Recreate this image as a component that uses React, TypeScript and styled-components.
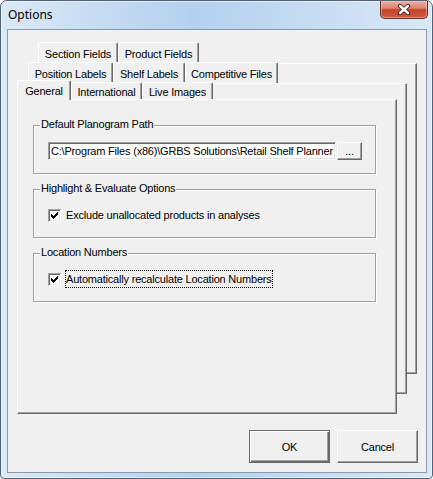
import React from "react";
import styled, { createGlobalStyle } from "styled-components";

const colors = {
  face: "#f0f0f0",
  light: "#ffffff",
  shadow: "#a0a0a0",
  darkShadow: "#696969",
  lightShadow: "#e3e3e3",
  text: "#000000",
};

const GlobalStyle = createGlobalStyle`
  html, body {
    margin: 0;
    padding: 0;
    background: #ffffff;
  }
  body {
    font-family: "Liberation Sans", Arial, sans-serif;
    font-size: 11px;
    letter-spacing: -0.2px;
    color: ${colors.text};
  }
`;

const Window = styled.div`
  box-sizing: border-box;
  width: 433px;
  height: 479px;
  display: flex;
  flex-direction: column;
  border: 1px solid #4f6378;
  border-radius: 7px 7px 4px 4px;
  background: linear-gradient(to right, #dce9f6 0%, #c6dcf2 22%, #b3d1ef 45%, #c4dbf2 70%, #dae8f6 100%);
  box-shadow: inset 0 0 0 1px rgba(255, 255, 255, 0.55);
`;

const TitleBar = styled.div`
  height: 28px;
  flex: none;
  display: flex;
  align-items: flex-start;
  justify-content: space-between;
`;

const Title = styled.span`
  font-family: "Noto Sans", "Open Sans", sans-serif;
  font-size: 12px;
  letter-spacing: normal;
  line-height: 16px;
  margin: 6px 0 0 7px;
`;

const CloseButton = styled.div`
  box-sizing: border-box;
  width: 48px;
  height: 18px;
  margin-right: 4px;
  border: 1px solid #6b2c24;
  border-top: none;
  border-radius: 0 0 5px 5px;
  background: linear-gradient(#eab0a3 0%, #dc8470 42%, #c5432a 52%, #cf5b3f 100%);
  box-shadow: inset 0 0 0 1px rgba(255, 210, 200, 0.45);
  display: flex;
  align-items: center;
  justify-content: center;
`;

const Client = styled.div`
  flex: 1;
  margin: 0 5px 5px 6px;
  border: 1px solid #8a9aac;
  background: ${colors.face};
  display: flex;
  flex-direction: column;
`;

const TabArea = styled.div`
  display: grid;
`;

const Layer = styled.div<{ $left: number; $top: number; $width: number }>`
  grid-area: 1 / 1;
  align-self: start;
  justify-self: start;
  margin: ${p => p.$top}px 0 0 ${p => p.$left}px;
  width: ${p => p.$width}px;
  display: flex;
  flex-direction: column;
`;

const TabRow = styled.div<{ $height: number }>`
  height: ${p => p.$height}px;
  display: flex;
  align-items: flex-end;
`;

const Tab = styled.div<{ $width: number; $height: number; $selected?: boolean }>`
  box-sizing: border-box;
  width: ${p => p.$width}px;
  height: ${p => p.$height}px;
  position: relative;
  z-index: ${p => (p.$selected ? 1 : 0)};
  margin-bottom: ${p => (p.$selected ? -1 : 0)}px;
  border-left: 1px solid ${colors.light};
  border-top: 1px solid ${colors.light};
  border-right: 1px solid ${colors.darkShadow};
  border-radius: 2px 2px 0 0;
  box-shadow: inset -1px 0 0 ${colors.shadow};
  background: ${colors.face};
  display: flex;
  align-items: center;
  justify-content: center;
  padding-top: 1px;
  white-space: nowrap;
`;

const Page = styled.div<{ $height: number }>`
  box-sizing: border-box;
  height: ${p => p.$height}px;
  border-top: 1px solid ${colors.light};
  border-left: 1px solid ${colors.light};
  border-right: 1px solid ${colors.darkShadow};
  border-bottom: 1px solid ${colors.darkShadow};
  box-shadow: inset -1px -1px 0 ${colors.shadow};
  background: ${colors.face};
  display: flex;
  flex-direction: column;
  gap: 15px;
  padding: 25px 0 0 15px;
`;

const Group = styled.div`
  box-sizing: border-box;
  position: relative;
  width: 343px;
  height: 49px;
  border: 1px solid ${colors.shadow};
  box-shadow: inset 1px 1px 0 ${colors.light}, 1px 1px 0 ${colors.light};
  padding: 16px 0 0 14px;
`;

const Legend = styled.span`
  position: absolute;
  top: -8px;
  left: 6px;
  padding: 0 1px;
  line-height: 13px;
  background: ${colors.face};
  white-space: nowrap;
`;

const PathRow = styled.div`
  display: flex;
  gap: 1px;
`;

const TextBox = styled.div`
  box-sizing: border-box;
  width: 288px;
  height: 18px;
  border: 1px solid;
  border-color: ${colors.shadow} ${colors.light} ${colors.light} ${colors.shadow};
  box-shadow: inset 1px 1px 0 ${colors.darkShadow}, inset -1px -1px 0 ${colors.lightShadow};
  background: #ffffff;
  padding: 0 0 0 2px;
  line-height: 16px;
  white-space: nowrap;
  overflow: hidden;
`;

const SmallButton = styled.div`
  box-sizing: border-box;
  width: 25px;
  height: 18px;
  border: 1px solid;
  border-color: ${colors.light} ${colors.darkShadow} ${colors.darkShadow} ${colors.light};
  box-shadow: inset -1px -1px 0 ${colors.shadow};
  display: flex;
  align-items: center;
  justify-content: center;
  line-height: 14px;
`;

const CheckRow = styled.div`
  height: 18px;
  display: flex;
  align-items: center;
`;

const CheckBox = styled.div`
  box-sizing: border-box;
  width: 13px;
  height: 13px;
  border: 1px solid;
  border-color: ${colors.shadow} ${colors.light} ${colors.light} ${colors.shadow};
  box-shadow: inset 1px 1px 0 ${colors.darkShadow}, inset -1px -1px 0 ${colors.lightShadow};
  background: #ffffff;
  display: flex;
  align-items: center;
  justify-content: center;
`;

const CheckLabel = styled.span<{ $focused?: boolean }>`
  margin-left: 4px;
  padding: 1px 0;
  line-height: 14px;
  border: 1px ${p => (p.$focused ? "dotted #000000" : "solid transparent")};
  white-space: nowrap;
`;

const ButtonRow = styled.div`
  flex: 1;
  display: flex;
  justify-content: flex-end;
  align-items: flex-start;
  gap: 7px;
  padding: 16px 8px 0 0;
`;

const DialogButton = styled.div<{ $default?: boolean }>`
  box-sizing: border-box;
  width: 81px;
  height: 33px;
  border: 1px solid;
  border-color: ${p =>
    p.$default
      ? colors.darkShadow
      : `${colors.light} ${colors.darkShadow} ${colors.darkShadow} ${colors.light}`};
  box-shadow: ${p =>
    p.$default
      ? `inset 1px 1px 0 ${colors.light}, inset -1px -1px 0 ${colors.darkShadow}, inset -2px -2px 0 ${colors.shadow}`
      : `inset -1px -1px 0 ${colors.shadow}`};
  display: flex;
  align-items: center;
  justify-content: center;
`;

function CheckMark() {
  return (
    <svg width="7" height="7" viewBox="0 0 7 7" shapeRendering="crispEdges">
      <path
        fill="#000"
        d="M6 0h1v1h-1z M5 1h2v1h-2z M0 2h1v1h-1z M4 2h3v1h-3z M0 3h2v1h-2z M3 3h3v1h-3z M0 4h5v1h-5z M1 5h3v1h-3z M2 6h1v1h-1z"
      />
    </svg>
  );
}

function CloseGlyph() {
  return (
    <svg width="14" height="11" viewBox="0 0 14 11">
      <path d="M3 2 L11 9 M11 2 L3 9" stroke="#3a2020" strokeWidth="4.2" strokeLinecap="round" />
      <path d="M3 2 L11 9 M11 2 L3 9" stroke="#ffffff" strokeWidth="2.4" strokeLinecap="round" />
    </svg>
  );
}

interface TabSpec {
  label: string;
  width: number;
}

const backTabs: TabSpec[] = [
  { label: "Section Fields", width: 80 },
  { label: "Product Fields", width: 81 },
];

const midTabs: TabSpec[] = [
  { label: "Position Labels", width: 85 },
  { label: "Shelf Labels", width: 72 },
  { label: "Competitive Files", width: 93 },
];

const frontTabs: TabSpec[] = [
  { label: "General", width: 54 },
  { label: "International", width: 71 },
  { label: "Live Images", width: 71 },
];

export default function App() {
  return (
    <>
      <GlobalStyle />
      <Window>
        <TitleBar>
          <Title>Options</Title>
          <CloseButton>
            <CloseGlyph />
          </CloseButton>
        </TitleBar>
        <Client>
          <TabArea>
            <Layer $left={30} $top={12} $width={379}>
              <TabRow $height={21}>
                {backTabs.map(t => (
                  <Tab key={t.label} $width={t.width} $height={21}>{t.label}</Tab>
                ))}
              </TabRow>
              <Page $height={311} />
            </Layer>
            <Layer $left={20} $top={32} $width={379}>
              <TabRow $height={21}>
                {midTabs.map(t => (
                  <Tab key={t.label} $width={t.width} $height={21}>{t.label}</Tab>
                ))}
              </TabRow>
              <Page $height={311} />
            </Layer>
            <Layer $left={9} $top={50} $width={380}>
              <TabRow $height={19}>
                {frontTabs.map((t, i) => (
                  <Tab key={t.label} $width={t.width} $height={i === 0 ? 20 : 17} $selected={i === 0}>
                    {t.label}
                  </Tab>
                ))}
              </TabRow>
              <Page $height={315}>
                <Group>
                  <Legend>Default Planogram Path</Legend>
                  <PathRow>
                    <TextBox>C:\Program Files (x86)\GRBS Solutions\Retail Shelf Planner</TextBox>
                    <SmallButton>...</SmallButton>
                  </PathRow>
                </Group>
                <Group>
                  <Legend>Highlight &amp; Evaluate Options</Legend>
                  <CheckRow>
                    <CheckBox>
                      <CheckMark />
                    </CheckBox>
                    <CheckLabel>Exclude unallocated products in analyses</CheckLabel>
                  </CheckRow>
                </Group>
                <Group>
                  <Legend>Location Numbers</Legend>
                  <CheckRow>
                    <CheckBox>
                      <CheckMark />
                    </CheckBox>
                    <CheckLabel $focused>Automatically recalculate Location Numbers</CheckLabel>
                  </CheckRow>
                </Group>
              </Page>
            </Layer>
          </TabArea>
          <ButtonRow>
            <DialogButton $default>OK</DialogButton>
            <DialogButton>Cancel</DialogButton>
          </ButtonRow>
        </Client>
      </Window>
    </>
  );
}
